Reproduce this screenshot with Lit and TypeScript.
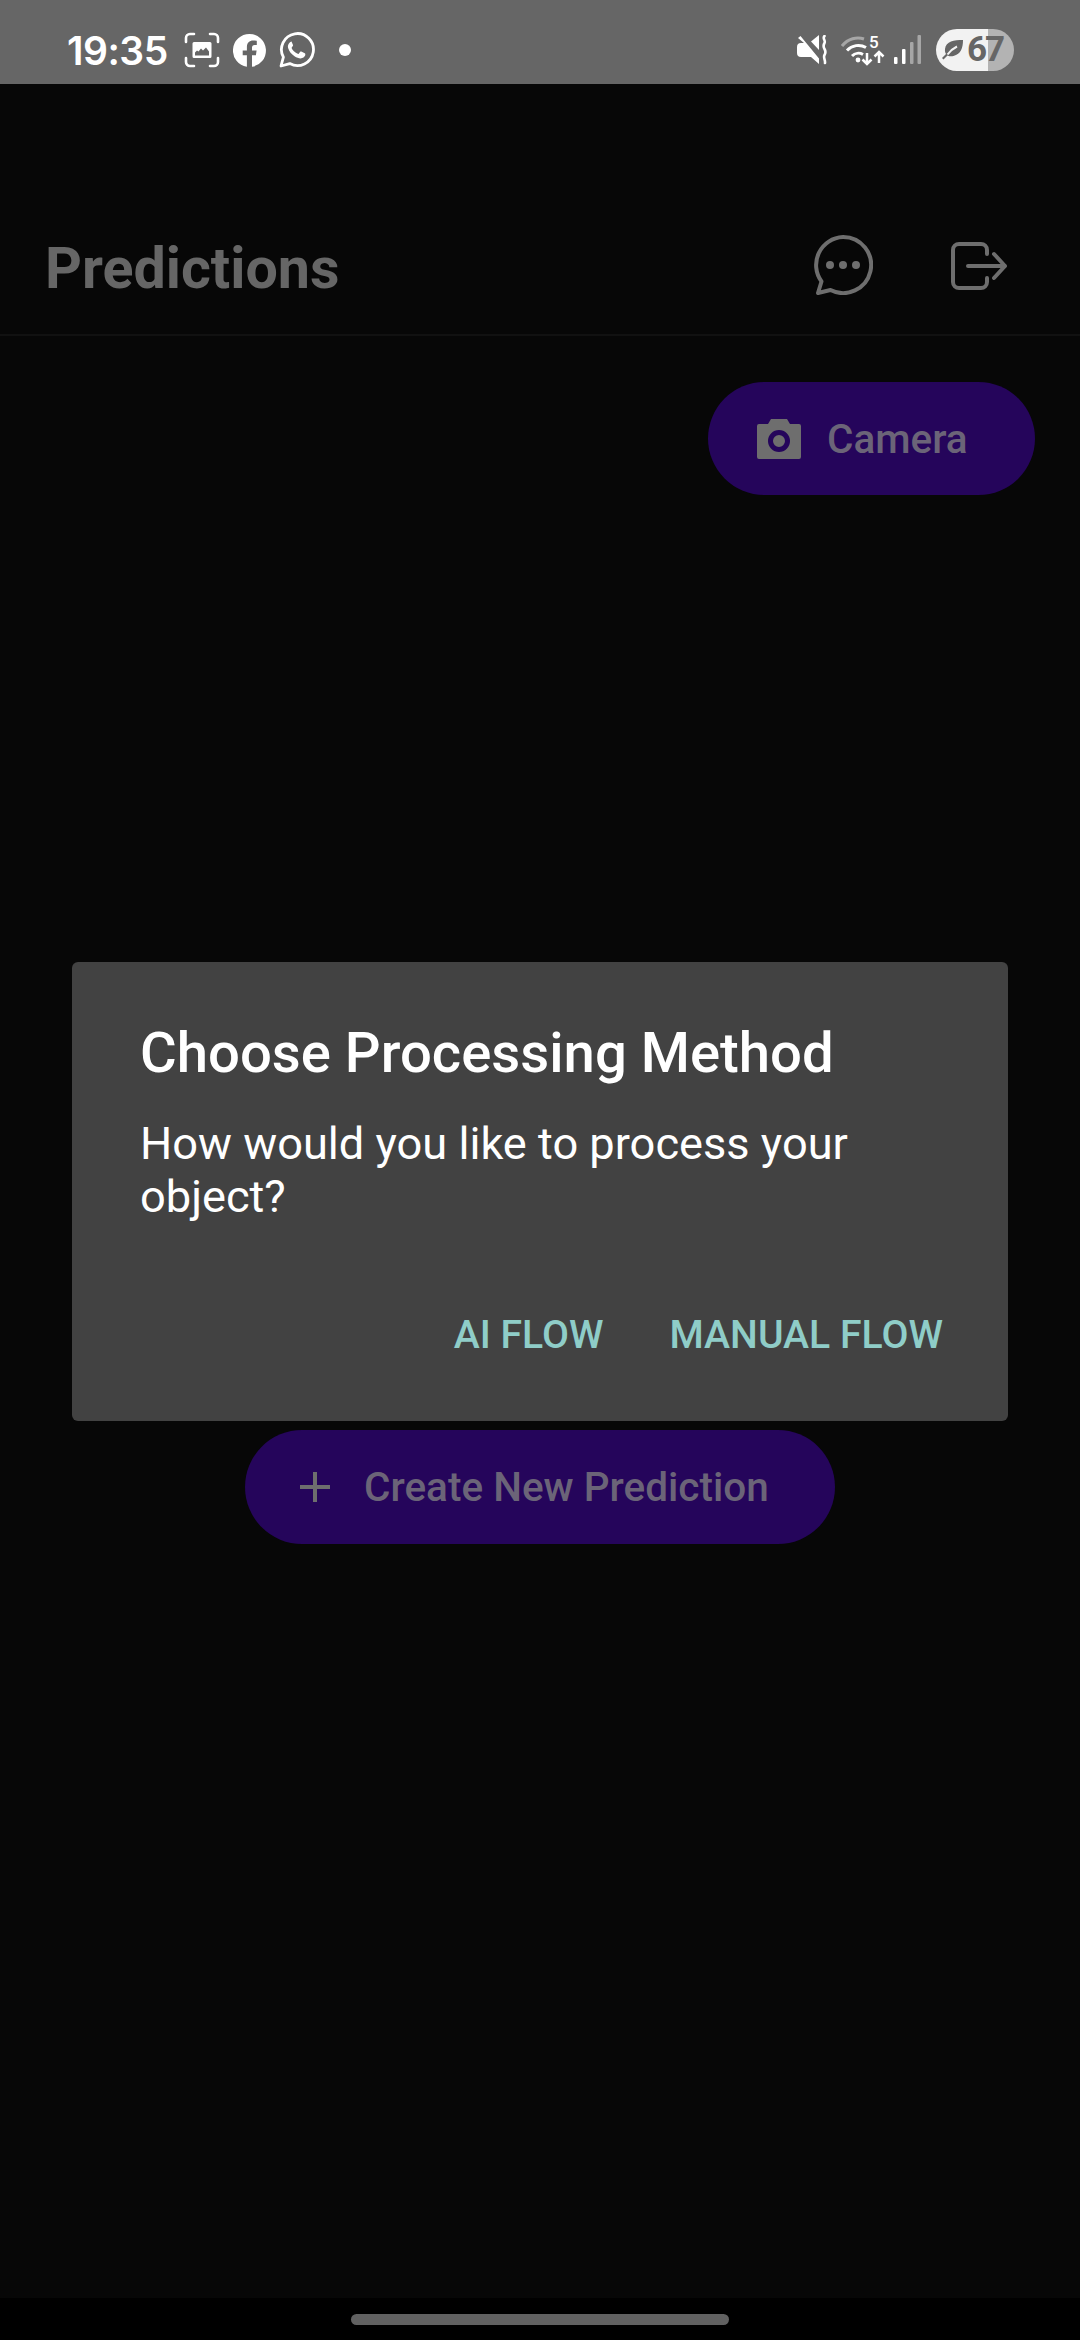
import { LitElement, html, css, svg } from 'lit';
import { customElement } from 'lit/decorators.js';

const scanIcon = svg`
  <g fill="none" stroke="#fff" stroke-width="2.6" stroke-linecap="round">
    <path d="M2 10V6a4 4 0 0 1 4-4h4M26 2h4a4 4 0 0 1 4 4v4M34 26v4a4 4 0 0 1-4 4h-4M10 34H6a4 4 0 0 1-4-4v-4"/>
  </g>
  <path fill="#fff" fill-rule="evenodd" d="M10 10h16a1.5 1.5 0 0 1 1.5 1.5v13a1.5 1.5 0 0 1-1.500 1.500H10a1.500 1.500 0 0 1-1.500-1.500v-13A1.500 1.500 0 0 1 10 10zM11 23.500h14v-4l-3-4-3 3-2-2-2.500 3-1.500-1-2 2z"/>`;

const fbIcon = svg`
  <path fill="#fff" d="M16.500 0a16.500 16.500 0 0 0-2.600 32.800V21.300H9.700v-4.800h4.200v-3.600c0-4.100 2.500-6.400 6.200-6.400 1.800 0 3.700.3 3.700.3v4.100h-2.100c-2 0-2.700 1.300-2.700 2.600v3h4.600l-.7 4.800h-3.900v11.500A16.500 16.500 0 0 0 16.500 0z"/>`;

const waIcon = svg`
  <path fill="none" stroke="#fff" stroke-width="2.800" stroke-linejoin="round" d="M2 34l2.400-8.800A16 16 0 1 1 10.800 31.600z"/>
  <path fill="#fff" d="M12.800 9.500c-.5 0-1.300.2-2 1-.7.700-2.500 2.400-1.600 5.800.9 3 3.300 6 6.300 8 3 1.900 5.700 2.500 7.700 1.800 2-.7 3-2.300 3.100-3.400.1-1-.1-1.300-.5-1.500l-3.500-1.700c-.5-.2-.8-.1-1.100.3l-1.500 1.900c-.3.300-.6.300-1 .1-1.200-.5-2.500-1.200-3.800-2.500-1.100-1.100-1.800-2.300-2.200-3.100-.2-.4 0-.7.200-1l.9-1.200c.3-.3.300-.6.200-1l-1.500-3.600c-.3-.7-.8-.9-1.200-.9z"/>`;

const muteIcon = svg`
  <path fill="#fff" d="M3.500 1 22 23.500V29l-8-7H4a4 4 0 0 1-4-4v-6a4 4 0 0 1 4-4h3L1 3z"/>
  <path fill="#fff" d="M14 6.500 22 0v15z"/>
  <path fill="none" stroke="#fff" stroke-width="2.600" stroke-linecap="round" d="M27.500 1c-2.500 2.500 1.500 4.500 0 7-1.500 2.500-1.500 3.500 0 6 1.500 2.500 1.500 3.500 0 6-1.500 2.500 1 5 .5 8"/>`;

const wifiIcon = svg`
  <path fill="none" stroke="#a6a6a6" stroke-width="3" d="M1 12C7 4.500 16 2.500 23 5"/>
  <path fill="none" stroke="#fff" stroke-width="3" d="M6 16.500C11 11 19 10 25 13.500M11 22c3-3 7.500-3.500 11-1.500"/>
  <circle cx="17" cy="26" r="2.400" fill="#fff"/>
  <path fill="none" stroke="#fff" stroke-width="2.500" d="M26 19v11M21.500 25.500l4.500 4.500 4.500-4.500M38 29V18M33.500 22.500 38 18l4.500 4.500"/>`;

const signalIcon = svg`
  <rect x="0" y="22" width="3.500" height="7" rx="1" fill="#fff"/>
  <rect x="8" y="14" width="3.500" height="15" rx="1" fill="#fff"/>
  <rect x="16" y="7" width="3.500" height="22" rx="1" fill="#a6a6a6"/>
  <rect x="23.500" y="0" width="3.500" height="29" rx="1" fill="#a6a6a6"/>`;

const leafIcon = svg`
  <path fill="#666" d="M21 0C12 0 4 1 3 9c-.3 2 .3 4 1 5L0 18l1.500 1.500 4-4c2 1 4 1 6 .5C19 14 21 8 21 0z"/>
  <path fill="none" stroke="#f2f2f2" stroke-width="2" d="M5.500 14.500C8 11 11 8.500 15 6.500"/>`;

@customElement('app-root')
export class AppRoot extends LitElement {
  static styles = css`
    :host {
      display: block;
      position: relative;
      width: 1080px;
      height: 2340px;
      overflow: hidden;
      background: #070707;
      font-family: Roboto, "Noto Sans", sans-serif;
    }
    .page { display: flex; flex-direction: column; height: 2340px; }

    .status {
      flex: none;
      height: 84px;
      box-sizing: border-box;
      background: #666;
      display: flex;
      align-items: center;
      padding: 16px 66px 0 67px;
      color: #fff;
    }
    .time { font-family: Inter, Roboto, sans-serif; font-size: 39px; font-weight: 600; letter-spacing: -0.5px; margin-right: 16px; }
    .status svg { display: block; flex: none; }
    .fb { margin-left: 13px; }
    .wa { margin-left: 13px; }
    .dot { width: 12px; height: 12px; border-radius: 50%; background: #fff; margin-left: 24px; }
    .spacer { flex: 1; }
    .wifi-wrap { position: relative; width: 44px; height: 32px; margin-left: 14px; }
    .wifi-five { position: absolute; left: 28px; top: 0; font-size: 17px; font-weight: 500; line-height: 17px; }
    .signal { margin-left: 9px; }
    .battery {
      position: relative;
      width: 78px;
      height: 42px;
      margin-left: 14px;
      border-radius: 21px;
      overflow: hidden;
      background: linear-gradient(90deg, #f2f2f2 0 52px, #b3b3b3 52px);
      color: #666;
      font-size: 35px;
      font-weight: 700;
      letter-spacing: -2px;
      line-height: 42px;
      display: flex;
      align-items: center;
      padding-left: 6px;
      gap: 3px;
      box-sizing: border-box;
    }

    .header {
      flex: none;
      height: 252px;
      box-sizing: border-box;
      padding: 152px 73px 0 45px;
      border-bottom: 2px solid #111;
      display: flex;
      align-items: flex-start;
    }
    .title { flex: 1; font-size: 57.4px; font-weight: 700; line-height: 66px; color: #666; }
    .chat { margin-top: -1px; display: block; }
    .logout { margin-top: 6px; margin-left: 78px; display: block; }

    .content { flex: 1; display: flex; flex-direction: column; align-items: flex-end; padding: 46px 45px 0; }
    .btn {
      display: flex;
      align-items: center;
      background: #25055b;
      color: #6b6478;
      height: 113px;
      border-radius: 57px;
      box-sizing: border-box;
      font-size: 40.5px;
      font-weight: 500;
    }
    .camera { width: 327px; padding-left: 49px; gap: 26px; }
    .create { width: 590px; height: 114px; padding-left: 55px; gap: 34px; align-self: center; margin-top: 935px; }

    .navbar { flex: none; height: 42px; background: #000; display: flex; justify-content: center; padding-top: 16px; box-sizing: border-box; }
    .pill { width: 378px; height: 11px; border-radius: 6px; background: #616161; }

    .overlay { position: absolute; left: 0; right: 0; top: 84px; bottom: 42px; display: flex; align-items: center; justify-content: center; }
    .dialog {
      width: 936px;
      height: 459px;
      box-sizing: border-box;
      background: #424242;
      border-radius: 6px;
      padding: 60px 65px 0 68px;
      color: #fff;
    }
    .dialog h2 { margin: 0; font-size: 56.25px; font-weight: 500; line-height: 63px; }
    .dialog p { margin: 32px 0 0; font-size: 45.2px; line-height: 53px; font-weight: 400; }
    .actions { display: flex; justify-content: flex-end; gap: 66px; margin-top: 86px; }
    .action { color: #8fcdc8; font-size: 39.2px; font-weight: 500; line-height: 52px; }
  `;

  render() {
    return html`
      <div class="page">
        <div class="status">
          <span class="time">19:35</span>
          <svg width="36" height="36" viewBox="0 0 36 36">${scanIcon}</svg>
          <svg class="fb" width="33" height="33" viewBox="0 0 33 33">${fbIcon}</svg>
          <svg class="wa" width="36" height="36" viewBox="0 0 36 36">${waIcon}</svg>
          <span class="dot"></span>
          <span class="spacer"></span>
          <svg width="30" height="30" viewBox="0 0 30 30">${muteIcon}</svg>
          <span class="wifi-wrap">
            <svg width="44" height="32" viewBox="0 0 44 32">${wifiIcon}</svg>
            <span class="wifi-five">5</span>
          </span>
          <svg class="signal" width="28" height="30" viewBox="0 0 28 30">${signalIcon}</svg>
          <span class="battery">
            <svg width="22" height="20" viewBox="0 0 22 20">${leafIcon}</svg>
            <span>67</span>
          </span>
        </div>

        <div class="header">
          <span class="title">Predictions</span>
          <svg class="chat" width="60" height="60" viewBox="0 0 60 60" fill="none" stroke="#6e6e6e" stroke-width="4" stroke-linejoin="round">
            <path d="M30 2a28 28 0 1 1-12.500 53L5 58l3.500-11.500A28 28 0 0 1 30 2z"/>
            <g fill="#6e6e6e" stroke="none">
              <circle cx="17" cy="30" r="4"/><circle cx="30" cy="30" r="4"/><circle cx="43" cy="30" r="4"/>
            </g>
          </svg>
          <svg class="logout" width="56" height="48" viewBox="0 0 56 48" fill="none" stroke="#6e6e6e" stroke-width="4" stroke-linecap="round" stroke-linejoin="round">
            <path d="M36 12V8a6 6 0 0 0-6-6H8a6 6 0 0 0-6 6v32a6 6 0 0 0 6 6h22a6 6 0 0 0 6-6v-4"/>
            <path d="M17 24h37M43 12l11 12-11 12"/>
          </svg>
        </div>

        <div class="content">
          <div class="btn camera">
            <svg width="44" height="40" viewBox="0 0 44 40">
              <path fill="#6e6e6e" fill-rule="evenodd" d="M14 0h16l3 5h9a2 2 0 0 1 2 2v31a2 2 0 0 1-2 2H2a2 2 0 0 1-2-2V7a2 2 0 0 1 2-2h9zM22 11a11 11 0 1 0 0 22 11 11 0 0 0 0-22zm0 5a6 6 0 1 1 0 12 6 6 0 0 1 0-12z"/>
            </svg>
            <span>Camera</span>
          </div>
          <div class="btn create">
            <svg width="30" height="30" viewBox="0 0 30 30"><path fill="none" stroke="#6e6e6e" stroke-width="4" d="M0 15h30M15 0v30"/></svg>
            <span>Create New Prediction</span>
          </div>
        </div>

        <div class="navbar"><span class="pill"></span></div>
      </div>

      <div class="overlay">
        <div class="dialog">
          <h2>Choose Processing Method</h2>
          <p>How would you like to process your object?</p>
          <div class="actions">
            <span class="action">AI FLOW</span>
            <span class="action">MANUAL FLOW</span>
          </div>
        </div>
      </div>
    `;
  }
}
